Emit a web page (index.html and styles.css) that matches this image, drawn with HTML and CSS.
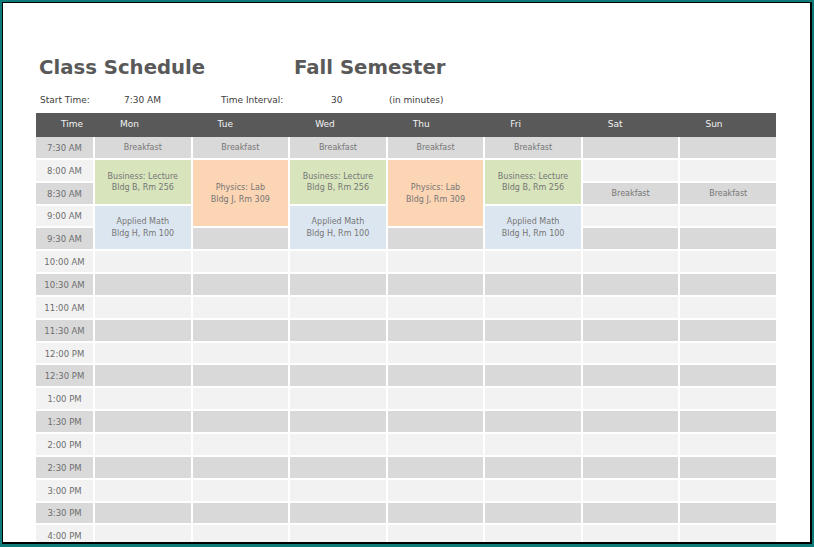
FILE: index.html
```html
<!DOCTYPE html>
<html>
<head>
<meta charset="utf-8">
<link rel="stylesheet" href="styles.css">
</head>
<body>
<div class="window">
  <div class="titles">
    <h1 class="title title-main">Class Schedule</h1>
    <h1 class="title">Fall Semester</h1>
  </div>
  <div class="info">
    <span class="i1">Start Time:</span>
    <span class="i2">7:30 AM</span>
    <span class="i3">Time Interval:</span>
    <span class="i4">30</span>
    <span class="i5">(in minutes)</span>
  </div>
  <div class="table">
    <div class="head">
      <div>Time</div><div>Mon</div><div>Tue</div><div>Wed</div><div>Thu</div><div>Fri</div><div>Sat</div><div>Sun</div>
    </div>
    <div class="body">
      <!-- 7:30 -->
      <div class="t d">7:30 AM</div>
      <div class="c d">Breakfast</div><div class="c d">Breakfast</div><div class="c d">Breakfast</div><div class="c d">Breakfast</div><div class="c d">Breakfast</div><div class="c d"></div><div class="c d"></div>
      <!-- 8:00 -->
      <div class="t l">8:00 AM</div>
      <div class="c ev green span2">Business: Lecture<br>Bldg B, Rm 256</div>
      <div class="c ev orange span3">Physics: Lab<br>Bldg J, Rm 309</div>
      <div class="c ev green span2">Business: Lecture<br>Bldg B, Rm 256</div>
      <div class="c ev orange span3">Physics: Lab<br>Bldg J, Rm 309</div>
      <div class="c ev green span2">Business: Lecture<br>Bldg B, Rm 256</div>
      <div class="c l"></div><div class="c l"></div>
      <!-- 8:30 -->
      <div class="t d">8:30 AM</div>
      <div class="c d">Breakfast</div><div class="c d">Breakfast</div>
      <!-- 9:00 -->
      <div class="t l">9:00 AM</div>
      <div class="c ev blue span2">Applied Math<br>Bldg H, Rm 100</div>
      <div class="c ev blue span2">Applied Math<br>Bldg H, Rm 100</div>
      <div class="c ev blue span2">Applied Math<br>Bldg H, Rm 100</div>
      <div class="c l"></div><div class="c l"></div>
      <!-- 9:30 -->
      <div class="t d">9:30 AM</div>
      <div class="c d"></div><div class="c d"></div><div class="c d"></div><div class="c d"></div>
      <!-- 10:00 -->
      <div class="t l">10:00 AM</div>
      <div class="c l"></div><div class="c l"></div><div class="c l"></div><div class="c l"></div><div class="c l"></div><div class="c l"></div><div class="c l"></div>
      <div class="t d">10:30 AM</div>
      <div class="c d"></div><div class="c d"></div><div class="c d"></div><div class="c d"></div><div class="c d"></div><div class="c d"></div><div class="c d"></div>
      <div class="t l">11:00 AM</div>
      <div class="c l"></div><div class="c l"></div><div class="c l"></div><div class="c l"></div><div class="c l"></div><div class="c l"></div><div class="c l"></div>
      <div class="t d">11:30 AM</div>
      <div class="c d"></div><div class="c d"></div><div class="c d"></div><div class="c d"></div><div class="c d"></div><div class="c d"></div><div class="c d"></div>
      <div class="t l">12:00 PM</div>
      <div class="c l"></div><div class="c l"></div><div class="c l"></div><div class="c l"></div><div class="c l"></div><div class="c l"></div><div class="c l"></div>
      <div class="t d">12:30 PM</div>
      <div class="c d"></div><div class="c d"></div><div class="c d"></div><div class="c d"></div><div class="c d"></div><div class="c d"></div><div class="c d"></div>
      <div class="t l">1:00 PM</div>
      <div class="c l"></div><div class="c l"></div><div class="c l"></div><div class="c l"></div><div class="c l"></div><div class="c l"></div><div class="c l"></div>
      <div class="t d">1:30 PM</div>
      <div class="c d"></div><div class="c d"></div><div class="c d"></div><div class="c d"></div><div class="c d"></div><div class="c d"></div><div class="c d"></div>
      <div class="t l">2:00 PM</div>
      <div class="c l"></div><div class="c l"></div><div class="c l"></div><div class="c l"></div><div class="c l"></div><div class="c l"></div><div class="c l"></div>
      <div class="t d">2:30 PM</div>
      <div class="c d"></div><div class="c d"></div><div class="c d"></div><div class="c d"></div><div class="c d"></div><div class="c d"></div><div class="c d"></div>
      <div class="t l">3:00 PM</div>
      <div class="c l"></div><div class="c l"></div><div class="c l"></div><div class="c l"></div><div class="c l"></div><div class="c l"></div><div class="c l"></div>
      <div class="t d">3:30 PM</div>
      <div class="c d"></div><div class="c d"></div><div class="c d"></div><div class="c d"></div><div class="c d"></div><div class="c d"></div><div class="c d"></div>
      <div class="t l">4:00 PM</div>
      <div class="c l"></div><div class="c l"></div><div class="c l"></div><div class="c l"></div><div class="c l"></div><div class="c l"></div><div class="c l"></div>
    </div>
  </div>
</div>
</body>
</html>
```
FILE: styles.css
```css
html, body {
  margin: 0;
  width: 814px;
  height: 547px;
  overflow: hidden;
}
body {
  background: #0e7b79;
  padding: 2px 2px 3px 2px;
  box-sizing: border-box;
  font-family: "DejaVu Sans", Verdana, sans-serif;
}
.window {
  box-sizing: border-box;
  width: 810px;
  height: 542px;
  background: #fff;
  border-top: 1px solid #000;
  border-left: 1px solid #000;
  border-right: 2px solid #000;
  border-bottom: 2px solid #000;
  overflow: hidden;
  padding: 53px 0 0 33px;
}
.titles {
  display: flex;
  height: 24px;
}
.title {
  margin: 0;
  font-size: 19.7px;
  line-height: 24px;
  font-weight: bold;
  color: #595959;
}
.title-main {
  width: 255px;
  padding-left: 3px;
}
.info {
  display: flex;
  margin-top: 14px;
  height: 12px;
  line-height: 12px;
  font-size: 9px;
  color: #404040;
  padding-left: 4px;
}
.i1 { width: 84px; }
.i2 { width: 97px; }
.i3 { width: 110px; }
.i4 { width: 58px; }
.table {
  width: 740px;
  margin-top: 7px;
}
.head {
  display: grid;
  grid-template-columns: 57px repeat(7, 1fr);
  column-gap: 2px;
  height: 24px;
  background: #595959;
  color: #f2f2f2;
  font-size: 9px;
  line-height: 23px;
}
.head div {
  padding-left: 25px;
}
.body {
  display: grid;
  grid-template-columns: 57px repeat(7, 1fr);
  grid-auto-rows: 20.85px;
  gap: 2px;
}
.t, .c {
  display: flex;
  align-items: center;
  justify-content: center;
  text-align: center;
}
.t {
  font-size: 8.5px;
  color: #6e6e6e;
  padding-top: 1px;
}
.c {
  font-size: 8px;
  line-height: 11.5px;
  color: #767676;
  padding-top: 1px;
}
.d { background: #d9d9d9; }
.l { background: #f2f2f2; }
.green { background: #d8e4bc; }
.orange { background: #fcd5b4; }
.blue { background: #dce6f1; }
.span2 { grid-row: span 2; }
.span3 { grid-row: span 3; }
```
